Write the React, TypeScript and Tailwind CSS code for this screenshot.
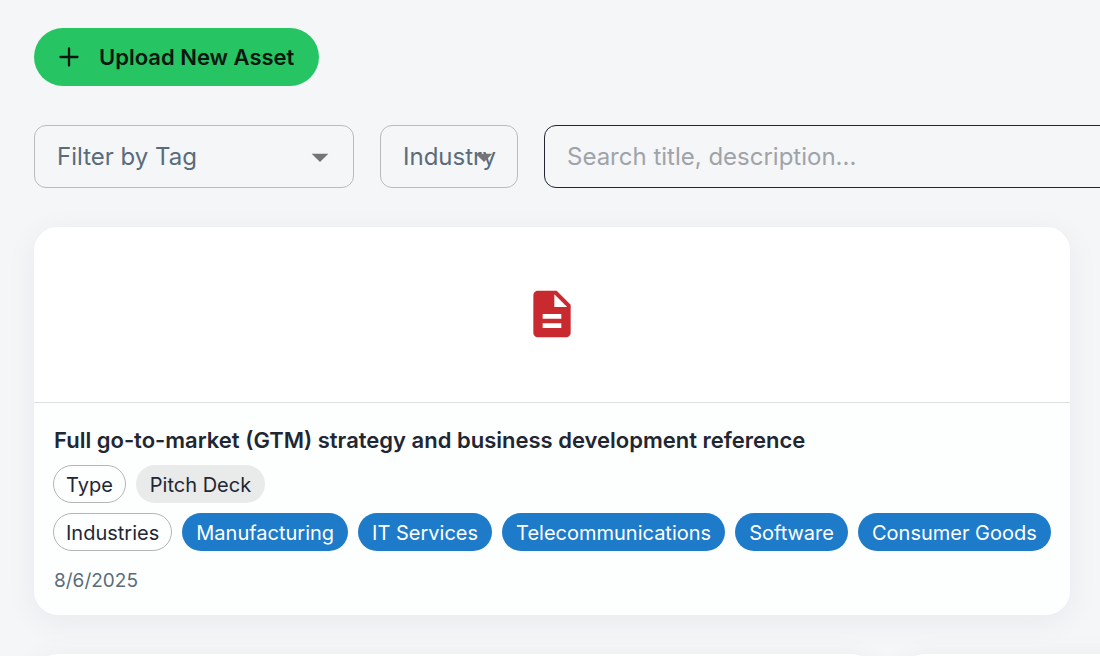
import React from 'react';
import { MdArrowDropDown, MdDescription } from 'react-icons/md';

const industries = ['Manufacturing', 'IT Services', 'Telecommunications', 'Software', 'Consumer Goods'];

const CHIP = 'inline-flex items-center h-[38px] pt-px rounded-full text-xl whitespace-nowrap';
const CHIP_OUTLINE = 'border border-[#b4b6b6] px-3 text-[#1f2733]';
const CHIP_GREY = 'bg-[#e9eaea] px-[14px] text-[#1f2733]';
const CHIP_BLUE = 'bg-[#1d7bca] px-[14px] text-white';

type FilterSelectProps = {
  id: string;
  label: string;
  className: string;
};

const FilterSelect: React.FC<FilterSelectProps> = ({ id, label, className }) => (
  <div className={`relative shrink-0 ${className}`}>
    <select
      id={id}
      aria-label={label}
      defaultValue=""
      className="h-[63px] w-full appearance-none rounded-xl border border-[#b9bbbe] bg-transparent pl-[22px] pr-0 text-2xl text-[#5a6b7b]"
    >
      <option value="">{label}</option>
    </select>
    <MdArrowDropDown className="pointer-events-none absolute right-[14px] top-3 size-10 text-[#747576]" />
  </div>
);

const AssetCard: React.FC = () => (
  <article className="overflow-hidden rounded-3xl bg-[#fdfefe] shadow-[0_6px_32px_rgba(31,39,51,0.06)]">
    <div className="flex h-44 items-center justify-center border-b border-[#dcdedf] bg-white pb-px">
      <MdDescription className="size-14 text-[#c92a2f]" />
    </div>
    <div className="flex flex-col px-5 py-5">
      <h2 className="pt-px text-[22px] font-semibold leading-8 text-[#1f2733]">
        Full go-to-market (GTM) strategy and business development reference
      </h2>
      <div className="-ml-px mt-[9px] flex gap-[10px]">
        <span className={`${CHIP} ${CHIP_OUTLINE}`}>Type</span>
        <span className={`${CHIP} ${CHIP_GREY}`}>Pitch Deck</span>
      </div>
      <div className="-ml-px mt-[10px] flex gap-[10px]">
        <span className={`${CHIP} ${CHIP_OUTLINE}`}>Industries</span>
        {industries.map((name) => (
          <span key={name} className={`${CHIP} ${CHIP_BLUE}`}>{name}</span>
        ))}
      </div>
      <time dateTime="2025-08-06" className="mt-4 text-[19px] leading-7 text-[#5a6b7b]">8/6/2025</time>
    </div>
  </article>
);

const App: React.FC = () => (
  <main className="h-screen overflow-hidden bg-[#f4f6f8] pl-[34px] pt-7 font-['Inter',sans-serif] [font-optical-sizing:none]">
    <button type="button" className="flex h-[58px] items-center gap-5 rounded-full bg-[#27c463] px-[25px] text-[22px] font-semibold text-[#08170f]">
      <svg viewBox="0 0 20 20" className="size-5" fill="none" stroke="currentColor" strokeWidth="2.3" strokeLinecap="round" aria-hidden="true">
        <path d="M10 1.5v17M1.5 10h17" />
      </svg>
      Upload New Asset
    </button>

    <div className="mt-[39px] flex gap-[26px]">
      <FilterSelect id="tag" label="Filter by Tag" className="w-80" />
      <FilterSelect id="industry" label="Industry" className="w-[138px]" />
      <input
        type="search"
        aria-label="Search assets"
        placeholder="Search title, description..."
        className="h-[63px] min-w-[640px] flex-1 rounded-xl border border-[#1f2733] bg-transparent px-[22px] text-2xl placeholder:text-[#a0a3a8]"
      />
    </div>

    <div className="mr-[30px] mt-[39px]">
      <AssetCard />
    </div>

    <div className="mt-[39px] flex gap-[26px]">
      <article className="h-96 w-[841px] shrink-0 rounded-3xl bg-white shadow-[0_6px_32px_rgba(31,39,51,0.06)]" />
      <article className="h-96 w-[841px] shrink-0 rounded-3xl bg-white shadow-[0_6px_32px_rgba(31,39,51,0.06)]" />
    </div>
  </main>
);

export default App;
